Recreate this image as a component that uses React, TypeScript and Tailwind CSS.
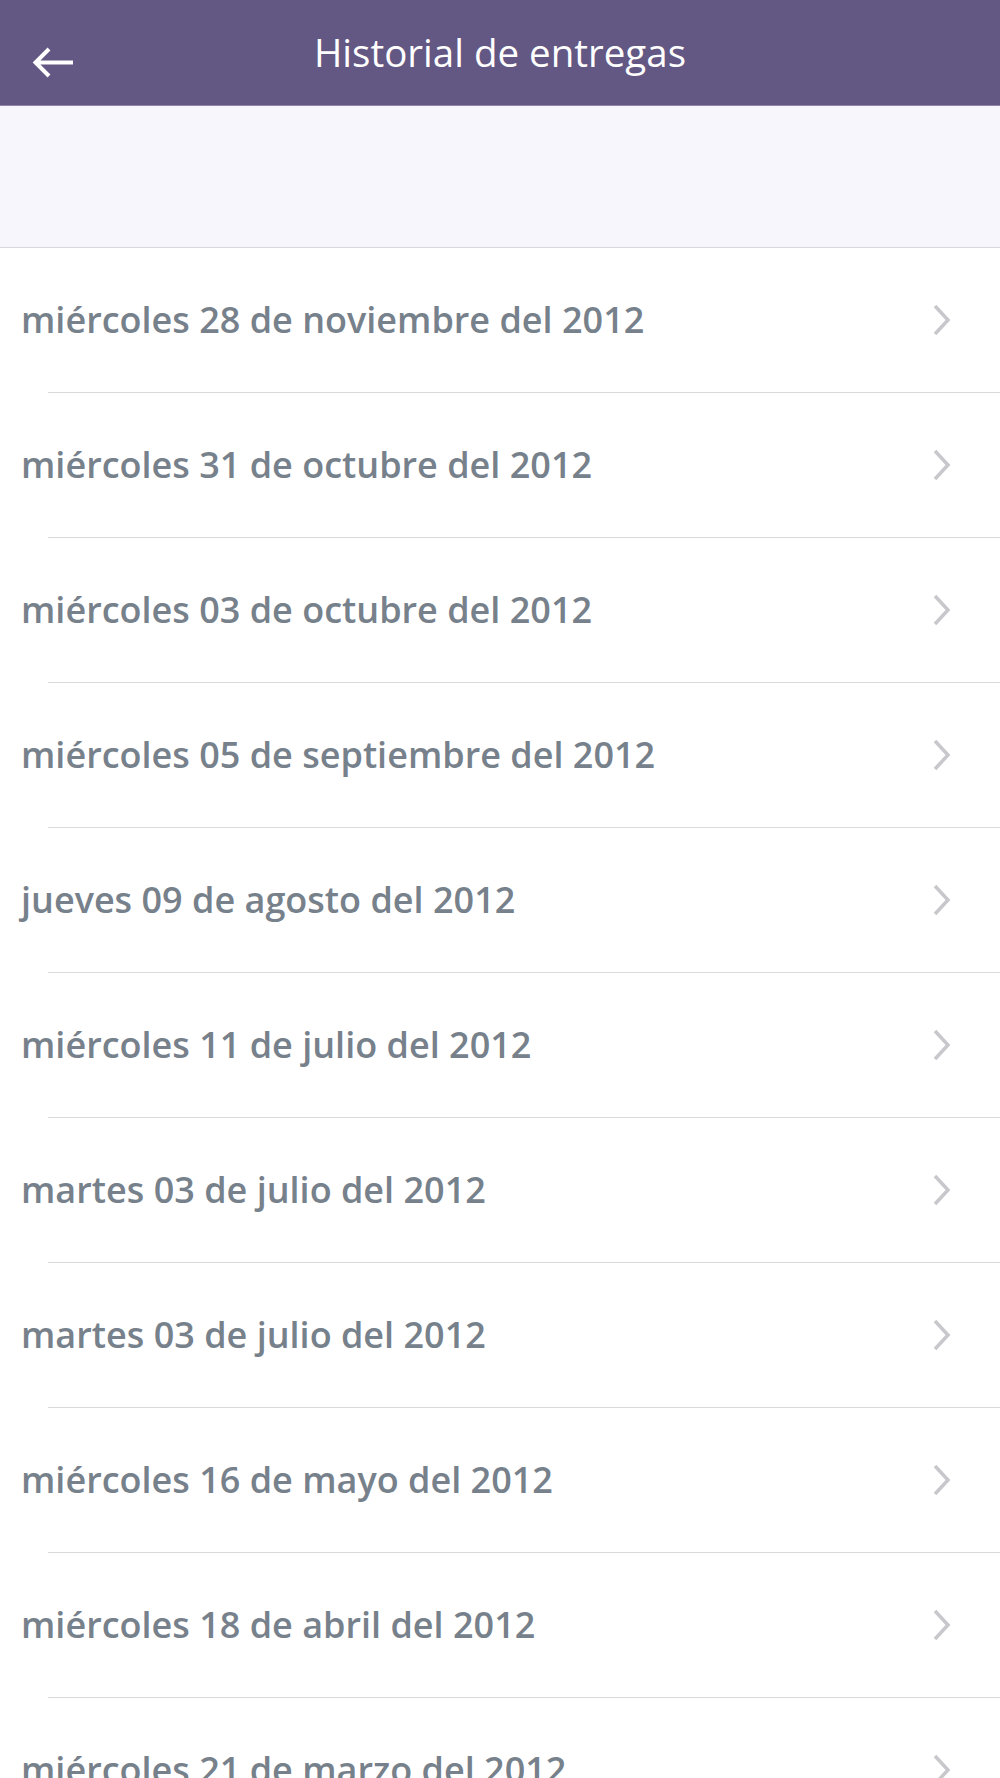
import React from "react";

const items = [
  "miércoles 28 de noviembre del 2012",
  "miércoles 31 de octubre del 2012",
  "miércoles 03 de octubre del 2012",
  "miércoles 05 de septiembre del 2012",
  "jueves 09 de agosto del 2012",
  "miércoles 11 de julio del 2012",
  "martes 03 de julio del 2012",
  "martes 03 de julio del 2012",
  "miércoles 16 de mayo del 2012",
  "miércoles 18 de abril del 2012",
  "miércoles 21 de marzo del 2012",
];

export default function App() {
  return (
    <div className="w-[1000px] h-[1778px] overflow-hidden bg-white" style={{ fontFamily: '"Open Sans", sans-serif' }}>
      <div className="h-[106px] bg-[#635783] flex items-center relative border-b border-[#8d84a6]">
        <svg className="absolute left-[32px] top-[47px]" width="42" height="31" viewBox="0 0 42 31" fill="none">
          <path d="M41 15.5H4M17 2L3.5 15.5L17 29" stroke="white" strokeWidth="4" />
        </svg>
        <div className="w-full text-center text-white text-[38.5px] leading-none -mt-[1px]">Historial de entregas</div>
      </div>
      <div className="h-[142px] bg-[#f7f6fd] border-b border-[#d8d8dc]" />
      <div>
        {items.map((t, i) => (
          <div key={i} className="pl-[48px]">
            <div className="h-[145px] flex items-center border-b border-[#d9d9dc]">
              <div className="flex-1 -ml-[27px] text-[36px] font-semibold text-[#77818b] whitespace-nowrap">{t}</div>
              <svg className="mr-[48px]" width="20" height="32" viewBox="0 0 20 32" fill="none">
                <path d="M3 2L16 16L3 30" stroke="#c7c7cc" strokeWidth="3.5" />
              </svg>
            </div>
          </div>
        ))}
      </div>
    </div>
  );
}
